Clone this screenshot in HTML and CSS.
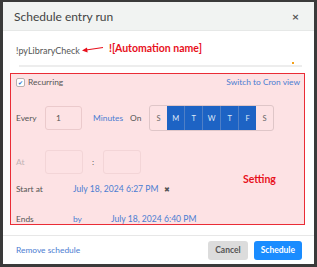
FILE: index.html
```html
<!DOCTYPE html>
<html lang="en">
<head>
  <meta charset="UTF-8" />
  <title>Schedule entry run</title>
  <link rel="stylesheet" href="styles.css">
</head>
<body>
  <div class="modal">
    <div class="modal-header">
      <span class="title">Schedule entry run</span>
      <span class="close">&times;</span>
    </div>

    <div class="modal-body">
      <div class="name-row">
        <span class="entry-name">!pyLibraryCheck</span>
        <svg class="arrow" width="22" height="8" viewBox="0 0 22 8">
          <line x1="21" y1="2.5" x2="4" y2="5" stroke="#e8101c" stroke-width="1.2"/>
          <polygon points="0,5.6 5,2.6 5.6,7.6" fill="#e8101c"/>
        </svg>
        <span class="note">![Automation name]</span>
      </div>
      <div class="divider"><span class="dot"></span></div>

      <div class="setting">
        <div class="row top-row">
          <label class="check"><span class="box">&#10004;</span>Recurring</label>
          <a class="link">Switch to Cron view</a>
        </div>

        <div class="row every-row">
          <span class="lbl">Every</span>
          <span class="input num">1</span>
          <a class="link unit">Minutes</a>
          <span class="on">On</span>
          <div class="days">
            <span class="day">S</span>
            <span class="day sel">M</span>
            <span class="day sel">T</span>
            <span class="day sel">W</span>
            <span class="day sel">T</span>
            <span class="day sel">F</span>
            <span class="day">S</span>
          </div>
        </div>

        <div class="row at-row">
          <span class="lbl muted">At</span>
          <span class="input faded"></span>
          <span class="colon">:</span>
          <span class="input faded"></span>
        </div>

        <div class="row start-row">
          <span class="lbl wide">Start at</span>
          <a class="link date">July 18, 2024 6:27 PM</a>
          <span class="clear">&#10006;</span>
          <span class="note setting-note">Setting</span>
        </div>

        <div class="row ends-row">
          <span class="lbl wide">Ends</span>
          <a class="link by">by</a>
          <a class="link date">July 18, 2024 6:40 PM</a>
        </div>
      </div>
    </div>

    <div class="modal-footer">
      <a class="link">Remove schedule</a>
      <div class="buttons">
        <button class="btn cancel">Cancel</button>
        <button class="btn primary">Schedule</button>
      </div>
    </div>
  </div>
</body>
</html>
```

FILE: styles.css
```css
body {
  margin: 0;
  background-color: #3a3a3a;
  font-family: Lato, "Open Sans", sans-serif;
  font-size: 8.4px;
  color: #555;
}

.modal {
  margin: 2px 3px 3px 3px;
  height: 262px;
  background: #fff;
  display: flex;
  flex-direction: column;
}

.modal-header {
  height: 28px;
  background-color: #f1f3f2;
  border-bottom: 1px solid #e6e8e7;
  display: flex;
  align-items: center;
  justify-content: space-between;
  padding: 0 15px 0 11px;
}

.title {
  font-size: 12px;
  color: #444;
}

.close {
  font-size: 12px;
  color: #555;
  font-weight: bold;
}

.modal-body {
  padding: 0 9px 0 7px;
}

.name-row {
  height: 34px;
  display: flex;
  align-items: center;
  padding-left: 6px;
  padding-top: 5px;
  box-sizing: border-box;
}

.entry-name {
  font-size: 9px;
  color: #555;
}

.arrow {
  margin: 0 5px 3px 2px;
}

.note {
  color: #e8101c;
  font-weight: bold;
  font-size: 10.5px;
  margin-bottom: 5px;
}

.divider {
  position: relative;
  height: 2px;
  margin: 0 3px 6px 9px;
  background-color: #ededed;
}

.dot {
  position: absolute;
  right: 8px;
  top: -3px;
  width: 2px;
  height: 2px;
  background: #f4a11a;
}

.setting {
  background-color: #fde2e4;
  border: 1.5px solid #ea2c36;
  height: 150px;
  padding: 0 4px 0 5px;
}

.row {
  display: flex;
  align-items: center;
}

.top-row {
  height: 16px;
  justify-content: space-between;
}

.check {
  display: flex;
  align-items: center;
}

.box {
  width: 7px;
  height: 7px;
  border: 1px solid #b9b0b0;
  border-radius: 2px;
  background: #fff;
  color: #2a6fd1;
  font-size: 6px;
  line-height: 7px;
  text-align: center;
  margin-right: 3px;
}

.link {
  color: #4b7dd2;
}

.every-row {
  height: 24px;
  margin-top: 16px;
}

.lbl {
  width: 29px;
}

.lbl.wide {
  width: 57px;
}

.input {
  width: 37px;
  height: 24px;
  border: 1px solid #ebcacc;
  border-radius: 3px;
  display: flex;
  align-items: center;
  padding-left: 10px;
  box-sizing: border-box;
}

.input.faded {
  border-color: #f3d5d7;
}

.unit {
  margin-left: 11px;
}

.on {
  margin-left: 7px;
  width: 19px;
}

.days {
  display: flex;
  border: 1px solid #dfc6c8;
  border-radius: 3px;
  height: 24px;
}

.day {
  width: 17px;
  display: flex;
  align-items: center;
  justify-content: center;
  font-size: 7.5px;
  color: #666;
}

.day.sel {
  background-color: #1d63c4;
  color: #dfe8f7;
  border-right: 1px solid #4f7fc6;
}

.day.sel:nth-child(6) {
  border-right: none;
}

.at-row {
  height: 23px;
  margin-top: 20px;
}

.at-row .input {
  width: 38px;
}

.muted {
  color: #c3b3b5;
}

.colon {
  width: 20px;
  text-align: center;
}

.start-row {
  height: 14px;
  margin-top: 9px;
  position: relative;
}

.date {
  font-size: 8.6px;
}

.clear {
  font-size: 7px;
  color: #555;
  margin-left: 6px;
}

.setting-note {
  position: absolute;
  left: 227px;
  top: -9px;
}

.ends-row {
  height: 14px;
  margin-top: 16px;
}

.by {
  width: 38px;
}

.modal-footer {
  margin-top: auto;
  height: 28px;
  border-top: 1px solid #e7e7e7;
  display: flex;
  align-items: center;
  justify-content: space-between;
  padding: 0 12px 0 13px;
}

.buttons {
  display: flex;
  gap: 6px;
}

.btn {
  font-family: Lato, "Open Sans", sans-serif;
  font-size: 8.5px;
  font-weight: bold;
  height: 19px;
  border: none;
  border-radius: 3px;
  padding: 0 7px;
}

.cancel {
  background-color: #dcdcdc;
  color: #555;
}

.primary {
  background-color: #1a8cff;
  color: #fff;
}
```
